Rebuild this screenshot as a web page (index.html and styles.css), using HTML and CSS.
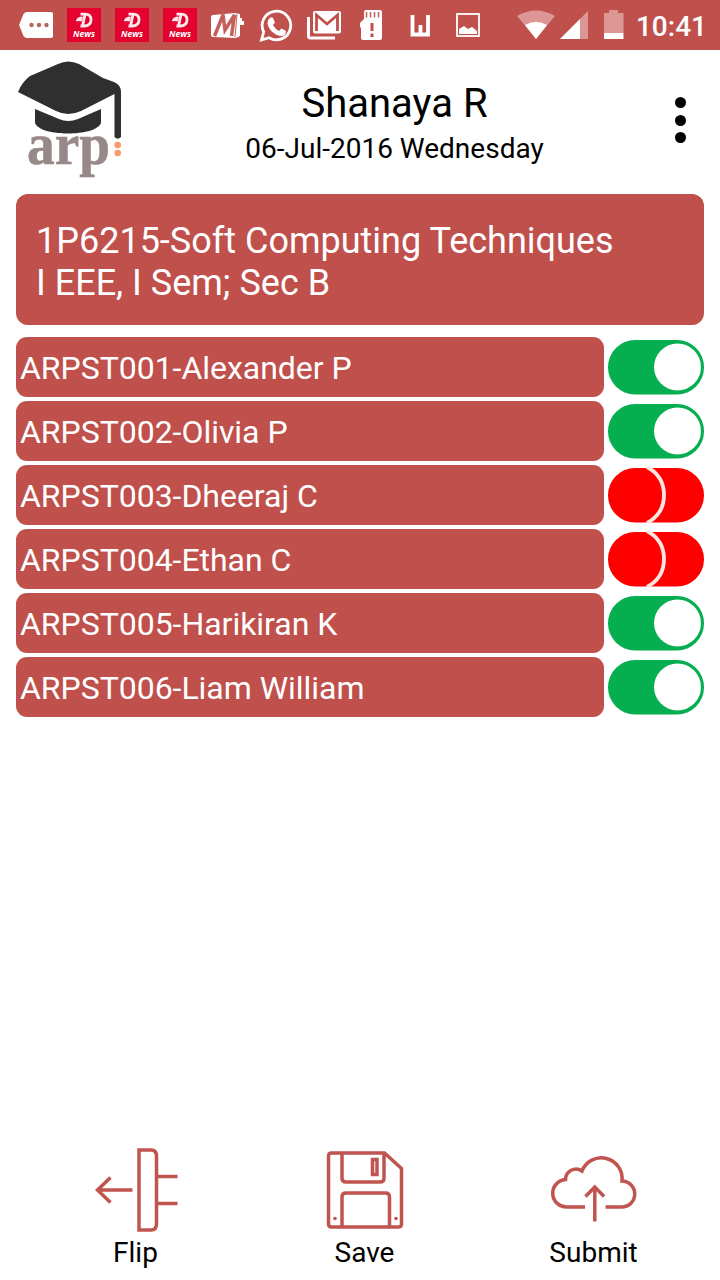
FILE: index.html
```html
<!DOCTYPE html>
<html lang="en">
<head>
    <meta charset="UTF-8">
    <meta name="viewport" content="width=device-width, initial-scale=1.0">
    <title>Attendance</title>
    <link rel="stylesheet" href="styles.css">
</head>
<body>
    <!-- Shared symbols -->
    <svg class="hidden">
        <symbol id="news" viewBox="0 0 48 50">
            <rect x="7" y="8" width="34" height="34" fill="#e4022f"/>
            <path d="M20.500 14.200h4.500Q31 14.200 31 19.800Q31 26 24 26H20.500M25 14.500L22.500 26" fill="none" stroke="#ffe9ee" stroke-width="2.800"/>
            <path d="M16 21.500q0-4 5-5l2 .5-1.500 4.500q-3-1-5.500 0z" fill="#ffe9ee"/>
            <text x="24" y="37" class="news-text">News</text>
        </symbol>
        <symbol id="on" viewBox="0 0 96 56">
            <rect x="0" y="1" width="96" height="54.500" rx="27" fill="#05ae4e"/>
            <circle cx="69.500" cy="28" r="23.500" fill="#fff"/>
        </symbol>
        <symbol id="off" viewBox="0 0 96 56">
            <rect x="0" y="1" width="96" height="54.500" rx="27" fill="#fe0000"/>
            <path d="M39 0Q56 9 56 28T39 56" fill="none" stroke="#ffe4e0" stroke-width="3.800"/>
        </symbol>
    </svg>

    <header class="status-bar">
        <div class="notifications">
            <svg viewBox="0 0 48 50"><path d="M15 12h24q2 0 2 2v22q0 2-2 2H15q-2 0-3.500-2L7 25l4.500-11q1.500-2 3.500-2z" fill="#fff"/><g fill="#b5665f"><circle cx="19.500" cy="25" r="2.200"/><circle cx="27" cy="25" r="2.200"/><circle cx="34.500" cy="25" r="2.200"/></g></svg>
            <svg viewBox="0 0 48 50"><use href="#news"/></svg>
            <svg viewBox="0 0 48 50"><use href="#news"/></svg>
            <svg viewBox="0 0 48 50"><use href="#news"/></svg>
            <svg viewBox="0 0 48 50"><path d="M9 15l22-2 5 1v22l-4 2-23-1q-2 0-2-2V17q0-2 2-2z" fill="#fff"/><path d="M10.500 36L19 15l2 15 9.500-15-3 21" fill="none" stroke="#c4605c" stroke-width="3.500"/><path d="M33 14l-2 23" stroke="#c4605c" stroke-width="1"/><path d="M36 18h2v3h2v4h-4z" fill="#fff"/></svg>
            <svg viewBox="0 0 48 50"><path d="M9.500 40l2.200-8A14.300 14.300 0 1 1 17 37.700z" fill="none" stroke="#fff" stroke-width="2.800"/><path d="M18 18q1.500-1.500 3 0l2 4.500-2 2.500q2 4 6 6l2.500-2.500 4.500 2.500q0 5-5 5c-7-1-13-7-13.500-13q0-3.500 2.500-5z" fill="#fff"/></svg>
            <svg viewBox="0 0 48 50"><rect x="13" y="11" width="28" height="22.500" rx="2" fill="#fff"/><path d="M16.500 31V15l10.500 9 10.500-9v16" fill="none" stroke="#bf504c" stroke-width="2.800"/><path d="M8.500 17v19q0 2 2 2H35" fill="none" stroke="#fff" stroke-width="3"/></svg>
            <svg viewBox="0 0 48 50"><path d="M17 10h15q2 0 2 2v26q0 2-2 2H15q-2 0-2-2V28l-1-1v-4l4-4v-7z" fill="#fff"/><path d="M18.500 12v5.500M22.500 12v5.500M26.500 12v5.500M30.500 12v5.500" stroke="#c4605c" stroke-width="1.500"/><path d="M24 23v8M24 33.500v3.500" stroke="#bf504c" stroke-width="3"/></svg>
            <svg viewBox="0 0 48 50"><path d="M16.500 15v19.500H32V15M24.500 35V25" fill="none" stroke="#fff" stroke-width="3.800"/></svg>
            <svg viewBox="0 0 48 50"><rect x="13" y="14" width="22" height="22" fill="none" stroke="#fff" stroke-width="1.800"/><path d="M15 34v-5l5-3 4 3 4-2 5 4v3z" fill="#fff"/></svg>
        </div>
        <div class="system">
            <svg width="38" height="50" viewBox="0 0 38 50"><path d="M0 16Q19 5 38 16L19 39z" fill="#dc9694"/><path d="M8 25Q19 19 30 25L19 39z" fill="#fff"/></svg>
            <svg width="28" height="50" viewBox="0 0 28 50"><path d="M28 11v28H0z" fill="#dc9694"/><path d="M20 19v20H0z" fill="#fff"/></svg>
            <svg class="battery" width="20" height="50" viewBox="0 0 20 50"><path d="M0 13h5v-3h9v3h5.500v20H0z" fill="#dc9694"/><path d="M0 33h19.500v6H0z" fill="#fff"/></svg>
            <span class="clock">10:41</span>
        </div>
    </header>

    <div class="title-bar">
        <svg class="logo" viewBox="0 0 110 120">
            <path d="M0 31Q4 21 12 15L40 3Q50-2 61 3L85 17L96 21Q103 24 103 31V76Q99.500 79.500 96.500 76V33L63 50Q50 56 38 50z" fill="#2f2f30"/>
            <path d="M17 48L41 58Q50 62 60 58L83 48V62C78 76 22 76 17 62z" fill="#2f2f30"/>
            <text x="9" y="103" textLength="83" lengthAdjust="spacingAndGlyphs" class="logo-text">arp</text>
            <circle cx="99.700" cy="84" r="3.300" fill="#fb9a6c"/>
            <circle cx="99.700" cy="92" r="3.300" fill="#fb9a6c"/>
        </svg>
        <div class="user">
            <h1>Shanaya R</h1>
            <p>06-Jul-2016 Wednesday</p>
        </div>
        <div class="menu"><i></i><i></i><i></i></div>
    </div>

    <main>
        <div class="course">1P6215-Soft Computing Techniques<br>I EEE, I Sem; Sec B</div>
        <ul class="students">
            <li><span>ARPST001-Alexander P</span><svg><use href="#on"/></svg></li>
            <li><span>ARPST002-Olivia P</span><svg><use href="#on"/></svg></li>
            <li><span>ARPST003-Dheeraj C</span><svg><use href="#off"/></svg></li>
            <li><span>ARPST004-Ethan C</span><svg><use href="#off"/></svg></li>
            <li><span>ARPST005-Harikiran K</span><svg><use href="#on"/></svg></li>
            <li><span>ARPST006-Liam William</span><svg><use href="#on"/></svg></li>
        </ul>
    </main>

    <footer>
        <div class="action">
            <svg viewBox="0 0 88 88"><path d="M47 4h12q5.500 0 5.500 6v68q0 6-5.500 6H47zM64.500 30.500h21M64.500 57.500h21M40.500 44H5.500M18.500 31.500L5.500 44l13 12.500"/></svg>
            Flip
        </div>
        <div class="action">
            <svg viewBox="0 0 88 88"><path d="M10.500 7h53l17 15.500V78q0 3-3 3h-67q-3 0-3-3V10q0-3 3-3M21 7v25q0 4 4 4h34q4 0 4-4V7M51.500 13.500H56v15h-4.500zM21 81V51q0-4 4-4h39.500q4 0 4 4v30"/><circle class="dot" cx="14" cy="72.500" r="1.800"/><circle class="dot" cx="75" cy="72.500" r="1.800"/></svg>
            Save
        </div>
        <div class="action">
            <svg viewBox="0 0 88 88"><path d="M35 61H17.500A13.700 13.700 0 0 1 15.500 33.500A10.500 10.500 0 0 1 32 25A20.800 20.800 0 0 1 72 35A13 13 0 0 1 71.500 61H55.500M44.800 75.500V41M35.500 50.500L44.800 41l9.300 9.500"/></svg>
            Submit
        </div>
    </footer>
</body>
</html>
```
FILE: styles.css
```css
* {
    box-sizing: border-box;
}
body {
    margin: 0;
    height: 1280px;
    display: flex;
    flex-direction: column;
    background: #fff;
    color: #000;
    font-family: Roboto, "Liberation Sans", sans-serif;
}
h1, p, ul {
    margin: 0;
    padding: 0;
    font-weight: normal;
}
svg {
    display: block;
    flex: none;
}
.hidden {
    display: none;
}
.status-bar {
    height: 50px;
    padding: 0 13px 0 12px;
    display: flex;
    justify-content: space-between;
    background: #bf504c;
}
.notifications, .system {
    display: flex;
}
.notifications svg {
    width: 48px;
    height: 50px;
}
.news-text {
    font: italic bold 8.5px "Open Sans", sans-serif;
    fill: #fff;
    text-anchor: middle;
}
.system svg + svg {
    margin-left: 5px;
}
.system .battery {
    margin-left: 16px;
}
.clock {
    margin-left: 12px;
    line-height: 53px;
    font-size: 28px;
    font-weight: 500;
    color: #fff;
}
.title-bar {
    height: 144px;
    padding: 11px 34px 0 18px;
    display: flex;
}
.logo {
    width: 110px;
    height: 120px;
    overflow: visible;
}
.logo-text {
    font: bold 60px "Liberation Serif", serif;
    fill: #978988;
    stroke: #978988;
    stroke-width: 0.6;
}
.user {
    flex: 1;
    padding: 19px 14px 0 0;
    text-align: center;
}
h1 {
    font-size: 40px;
    line-height: 48px;
}
.user p {
    font-size: 28px;
    line-height: 42px;
}
.menu {
    padding-top: 36px;
    display: flex;
    flex-direction: column;
    gap: 6.5px;
}
.menu i {
    width: 11px;
    height: 11px;
    border-radius: 50%;
    background: #000;
}
main {
    flex: 1;
    padding: 0 16px;
}
.course {
    height: 131px;
    padding: 26px 20px;
    border-radius: 12px;
    background: #bf504c;
    color: #fff;
    font-size: 36px;
    line-height: 42px;
}
.students {
    margin-top: 12px;
    display: flex;
    flex-direction: column;
    gap: 4px;
    list-style: none;
}
.students li {
    display: flex;
    align-items: center;
    gap: 4px;
}
.students span {
    flex: 1;
    height: 60px;
    padding-left: 4px;
    border-radius: 11px;
    background: #bf504c;
    color: #fff;
    font-size: 32px;
    line-height: 63px;
    letter-spacing: -0.03px;
}
.students svg {
    width: 96px;
    height: 56px;
}
footer {
    height: 134px;
    padding: 0 12px 0 21px;
    display: flex;
}
.action {
    flex: 1;
    display: flex;
    flex-direction: column;
    align-items: center;
    font-size: 28px;
    line-height: 38px;
}
.action svg {
    width: 88px;
    height: 88px;
    fill: none;
    stroke: #c0544f;
    stroke-width: 3.500;
}
.action .dot {
    fill: #c0544f;
    stroke: none;
}
```
